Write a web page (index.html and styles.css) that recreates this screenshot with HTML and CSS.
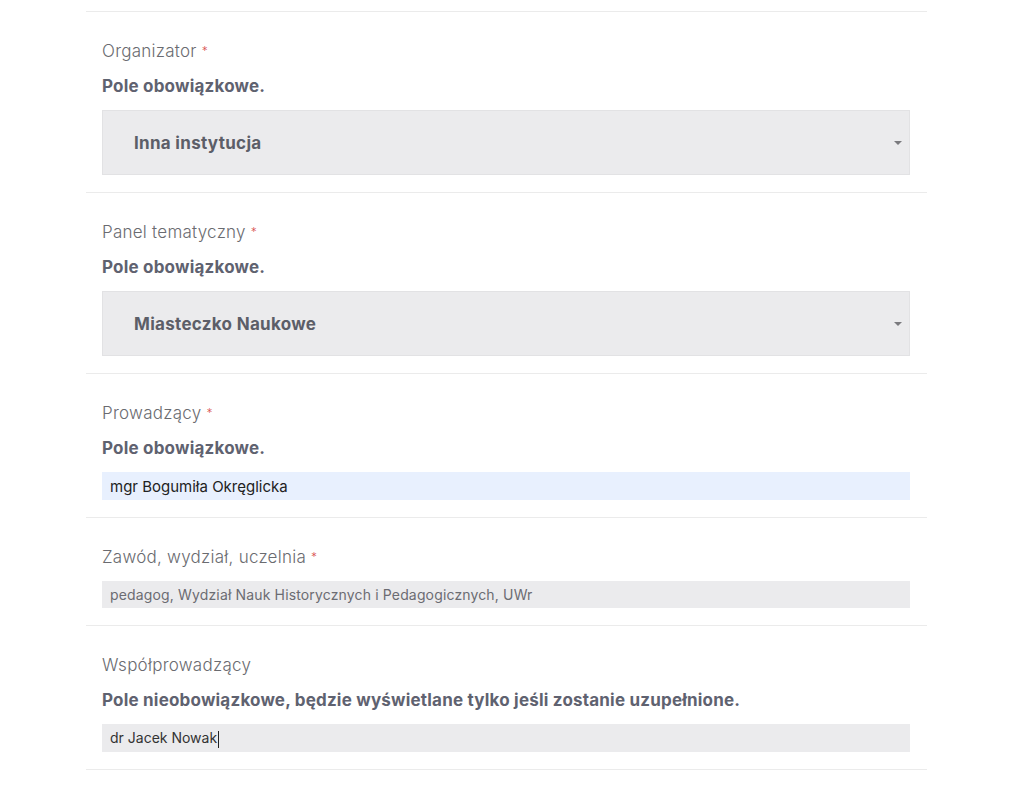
FILE: index.html
```html
<!DOCTYPE html>
<html lang="pl">
<head>
<meta charset="UTF-8">
<meta name="viewport" content="width=device-width, initial-scale=1.0">
<title>Formularz wydarzenia</title>
<link rel="stylesheet" href="styles.css">
</head>
<body>
<div class="form-wrap">
  <!-- Organizator -->
  <div class="field">
    <label class="field-label">Organizator <span class="req">*</span></label>
    <div class="field-desc">Pole obowiązkowe.</div>
    <div class="select-box">
      <span class="select-value">Inna instytucja</span>
      <span class="select-arrow"></span>
    </div>
  </div>
  <!-- Panel tematyczny -->
  <div class="field">
    <label class="field-label">Panel tematyczny <span class="req">*</span></label>
    <div class="field-desc">Pole obowiązkowe.</div>
    <div class="select-box">
      <span class="select-value">Miasteczko Naukowe</span>
      <span class="select-arrow"></span>
    </div>
  </div>
  <!-- Prowadzący -->
  <div class="field">
    <label class="field-label">Prowadzący <span class="req">*</span></label>
    <div class="field-desc">Pole obowiązkowe.</div>
    <input class="text-input autofilled" type="text" value="mgr Bogumiła Okręglicka">
  </div>
  <!-- Zawód -->
  <div class="field">
    <label class="field-label">Zawód, wydział, uczelnia <span class="req">*</span></label>
    <input class="text-input muted" type="text" value="pedagog, Wydział Nauk Historycznych i Pedagogicznych, UWr">
  </div>
  <!-- Współprowadzący -->
  <div class="field">
    <label class="field-label">Współprowadzący</label>
    <div class="field-desc">Pole nieobowiązkowe, będzie wyświetlane tylko jeśli zostanie uzupełnione.</div>
    <div class="text-input typing">dr Jacek Nowak<span class="caret"></span></div>
  </div>
</div>
</body>
</html>
```
FILE: styles.css
```css
body {
  margin: 0;
  background: #fff;
  font-family: Inter, "Noto Sans", sans-serif;
  color: #6b6c72;
}
.form-wrap {
  width: 841px;
  margin-left: 86px;
  padding-top: 11px;
}
.field {
  border-top: 1px solid #ebebeb;
  padding: 28px 17px 17px 16px;
}
.field:last-child {
  border-bottom: 1px solid #ebebeb;
}
.field-label {
  display: block;
  font-size: 17px;
  font-weight: 300;
  letter-spacing: 0.25px;
  line-height: 22px;
  color: #6a6b70;
  margin-bottom: 13px;
}
/* gwiazdka przy polu obowiązkowym */
.req {
  color: #d9534f;
  font-size: 12px;
  vertical-align: top;
}
.field-desc {
  font-size: 17px;
  font-weight: 700;
  letter-spacing: 0.2px;
  line-height: 22px;
  color: #5f6270;
  margin-bottom: 13px;
}
.select-box {
  height: 63px;
  background: #ebebed;
  border: 1px solid #e2e2e4;
  display: flex;
  align-items: center;
  padding: 0 7px 0 31px;
}
.select-value {
  flex: 1;
  font-size: 17px;
  font-weight: 700;
  letter-spacing: 0.3px;
  color: #5c5e68;
}
.select-arrow {
  width: 0;
  height: 0;
  border-left: 4px solid transparent;
  border-right: 4px solid transparent;
  border-top: 4px solid #7a7a7e;
}
.text-input {
  display: block;
  box-sizing: border-box;
  width: 100%;
  height: 27px;
  border: none;
  margin: 0;
  padding: 0 8px;
  font-family: Inter, "Noto Sans", sans-serif;
  font-size: 14px;
  line-height: 27px;
  background: #ebebed;
  color: #333;
  outline: none;
}
.field-label + .text-input {
  margin-top: 1px;
}
.autofilled {
  height: 28px;
  font-size: 15px;
  background: #e8f0fe;
  color: #222;
}
.muted {
  letter-spacing: 0.15px;
  color: #6b6c72;
}
.typing {
  height: 28px;
  line-height: 28px;
  color: #333;
}
.caret {
  display: inline-block;
  width: 1px;
  height: 17px;
  background: #222;
  vertical-align: middle;
  margin-left: 1px;
}
```
